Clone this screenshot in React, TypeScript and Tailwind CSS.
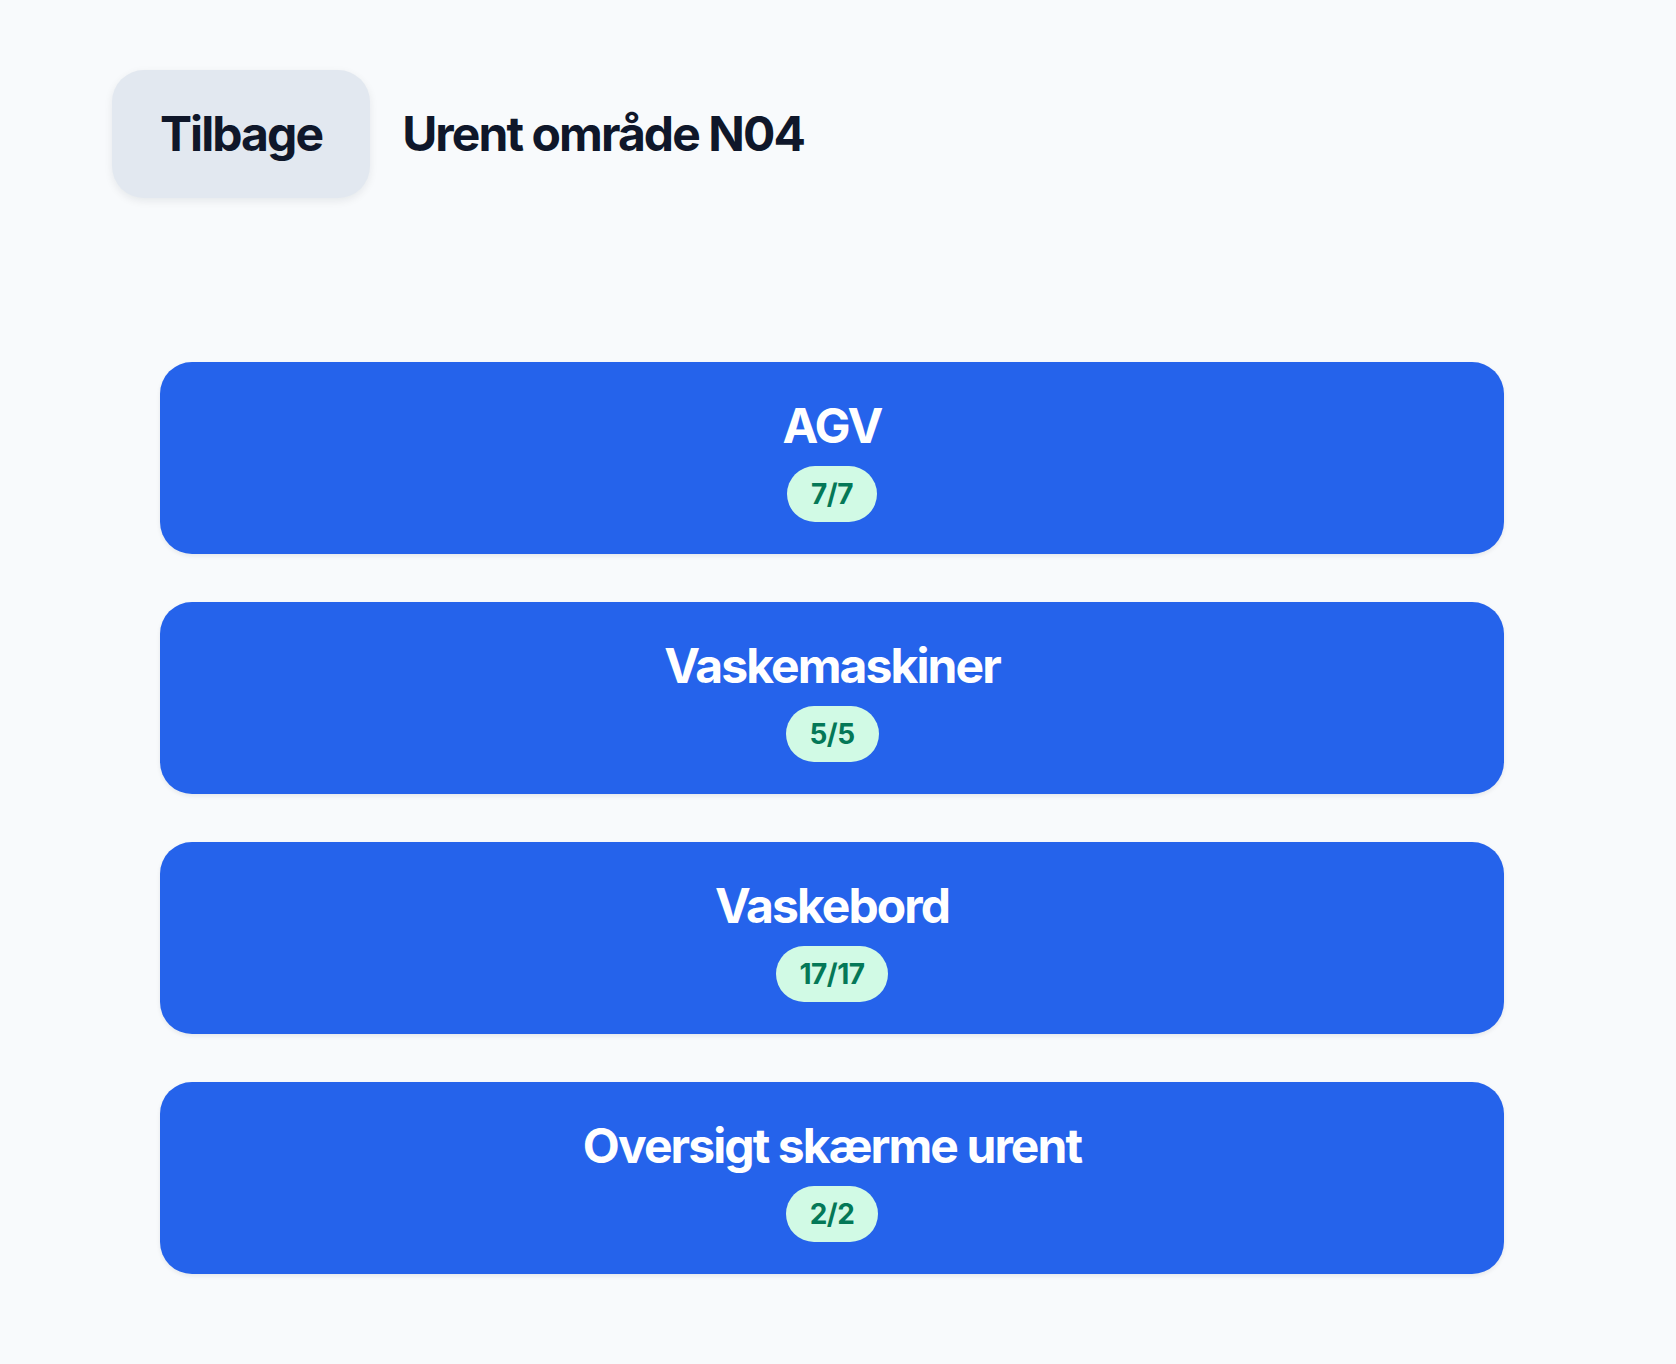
import React from "react";

type Area = { name: string; done: number; total: number };

const areas: Area[] = [
  { name: "AGV", done: 7, total: 7 },
  { name: "Vaskemaskiner", done: 5, total: 5 },
  { name: "Vaskebord", done: 17, total: 17 },
  { name: "Oversigt skærme urent", done: 2, total: 2 },
];

function AreaCard({ area }: { area: Area }) {
  return (
    <button
      type="button"
      className="flex h-[192px] w-full flex-col items-center justify-center rounded-[32px] bg-[#2563eb] text-white shadow-[0_2px_4px_rgba(15,23,42,0.08)]"
    >
      <span className="text-[48px] font-bold leading-[64px] tracking-[-0.04em]">{area.name}</span>
      <span className="mt-2 rounded-full bg-[#d1fae5] px-6 py-2 text-[28px] font-bold leading-[40px] tracking-[-0.02em] text-[#047857]">
        {area.done}/{area.total}
      </span>
    </button>
  );
}

export default function App() {
  return (
    <div className="min-h-screen bg-[#f8fafc] pb-20 pt-[70px] font-['Inter','Liberation_Sans',sans-serif] text-[#0f172a]">
      <header className="flex items-center gap-8 pl-[112px]">
        <button
          type="button"
          className="rounded-[32px] bg-[#e2e8f0] px-12 py-10 text-[48px] font-bold leading-[48px] tracking-[-0.04em] shadow-[0_3px_8px_rgba(15,23,42,0.08)]"
        >
          Tilbage
        </button>
        <h1 className="text-[48px] font-bold leading-[64px] tracking-[-0.04em]">Urent område N04</h1>
      </header>

      <main className="ml-[160px] mt-[164px] flex w-[1344px] flex-col gap-12">
        {areas.map((a) => (
          <AreaCard key={a.name} area={a} />
        ))}
      </main>
    </div>
  );
}
